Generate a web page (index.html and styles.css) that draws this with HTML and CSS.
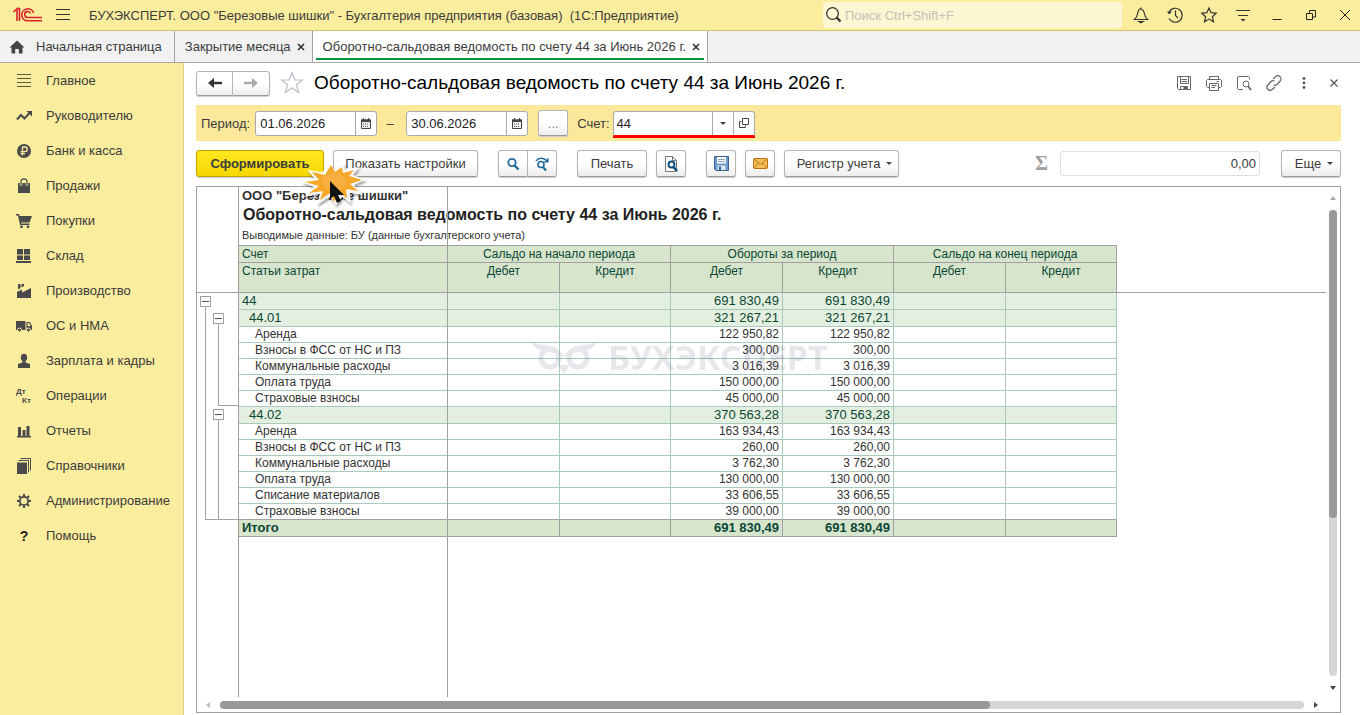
FILE: index.html
```html
<!DOCTYPE html>
<html lang="ru">
<head>
    <meta charset="UTF-8">
    <meta name="viewport" content="width=device-width, initial-scale=1.0">
    <title>Бухгалтерия предприятия</title>
    <link rel="stylesheet" href="styles.css">
</head>
<body>
    <header class="titlebar">
        <svg class="logo" width="30" height="16" viewBox="0 0 30 16" fill="none" stroke="#d8232a" stroke-width="1.6">
            <path d="M0.500 5L4 2V14M6.500 1V14"/>
            <path d="M4 1.500H7"/>
            <path d="M20.500 6A6 6 0 1 0 14.500 13.800H29"/>
            <path d="M17.500 6.500A3 3 0 1 0 15 10.500H29"/>
        </svg>
        <button class="icon-btn burger" aria-label="Меню">
            <svg width="16" height="14" viewBox="0 0 16 14" stroke="#333"><path d="M1 1.500H15M1 6.500H15M1 11.500H15"/></svg>
        </button>
        <span class="app-title">БУХЭКСПЕРТ. ООО "Березовые шишки" - Бухгалтерия предприятия (базовая)&nbsp; (1С:Предприятие)</span>
        <label class="search">
            <svg width="18" height="18" viewBox="0 0 18 18" fill="none" stroke="#333"><circle cx="7.500" cy="7.500" r="5.800" stroke-width="1.300"/><path d="M11.500 11.500L15.500 15.500" stroke-width="2.400"/></svg>
            <input type="text" placeholder="Поиск Ctrl+Shift+F" aria-label="Поиск">
        </label>
        <div class="window-tools">
            <button class="icon-btn" aria-label="Уведомления">
                <svg width="16" height="18" viewBox="0 0 16 18" fill="none" stroke="#333" stroke-width="1.200"><path d="M8 1.500V3M1.500 13.500H14.500C12.500 12 12 10.500 11.500 8C11 5 10 3.500 8 3S5 5 4.500 8C4 10.500 3.500 12 1.500 13.500Z"/><path d="M6 15.500H10L8 16.800Z" fill="#333"/></svg>
            </button>
            <button class="icon-btn" aria-label="История">
                <svg width="18" height="18" viewBox="0 0 18 18" fill="none" stroke="#333" stroke-width="1.200"><path d="M3 6A7 7 0 1 1 3 12.500M9.500 4.500V9.500L12 12"/><path d="M1 5.500H6L3.200 8.500Z" fill="#333" stroke="none"/></svg>
            </button>
            <button class="icon-btn" aria-label="Избранное">
                <svg width="18" height="18" viewBox="0 0 18 18" fill="none" stroke="#333" stroke-width="1.200"><path d="M9 2L11.100 6.700L16.200 7.200L12.400 10.700L13.500 15.700L9 13.100L4.500 15.700L5.600 10.700L1.800 7.200L6.900 6.700Z"/></svg>
            </button>
            <button class="icon-btn" aria-label="Настройки">
                <svg width="16" height="16" viewBox="0 0 16 16" stroke="#333" stroke-width="1.200"><path d="M1 3.500H15M3 8.500H13"/><path d="M5.500 12H10.500L8 14.500Z" fill="#333" stroke="none"/></svg>
            </button>
            <button class="icon-btn" aria-label="Свернуть">
                <svg width="12" height="12" viewBox="0 0 12 12" stroke="#222"><path d="M1.500 10.500H10.500"/></svg>
            </button>
            <button class="icon-btn" aria-label="Восстановить">
                <svg width="12" height="12" viewBox="0 0 12 12" fill="none" stroke="#222"><path d="M1.500 4.500H7.500V10.500H1.500ZM4.500 4V1.500H10.500V8H8"/></svg>
            </button>
            <button class="icon-btn" aria-label="Закрыть">
                <svg width="12" height="12" viewBox="0 0 12 12" stroke="#222"><path d="M1 1L11 11M11 1L1 11"/></svg>
            </button>
        </div>
    </header>

    <nav class="tabs">
        <div class="tab tab-home">
            <svg width="16" height="14" viewBox="0 0 16 14" fill="#444"><path d="M8 0.500L15.500 7.500H13.500V13.500H9.800V9H6.200V13.500H2.500V7.500H0.500Z"/></svg>
            <a href="#">Начальная страница</a>
        </div>
        <div class="tab">
            <a href="#">Закрытие месяца</a>
            <button class="tab-close" aria-label="Закрыть вкладку"><svg width="8" height="8" viewBox="0 0 8 8" stroke="#333" stroke-width="1.600"><path d="M1 1L7 7M7 1L1 7"/></svg></button>
        </div>
        <div class="tab active">
            <a href="#">Оборотно-сальдовая ведомость по счету 44 за Июнь 2026 г.</a>
            <button class="tab-close" aria-label="Закрыть вкладку"><svg width="8" height="8" viewBox="0 0 8 8" stroke="#333" stroke-width="1.600"><path d="M1 1L7 7M7 1L1 7"/></svg></button>
        </div>
    </nav>

    <div class="workspace">
        <nav class="sidebar">
            <a href="#"><svg viewBox="0 0 16 16" stroke="#5c583f" fill="none"><path d="M1 1.500H15M1 5.500H15M1 9.500H15M1 13.500H15"/></svg>Главное</a>
            <a href="#"><svg viewBox="0 0 16 16"><path d="M1 11.500L5 7L8.500 10.500L13.500 5" fill="none" stroke="#4a4a4a" stroke-width="2"/><path d="M10.500 3H16V8.500Z"/></svg>Руководителю</a>
            <a href="#"><svg viewBox="0 0 16 16"><circle cx="8" cy="8" r="7"/><path d="M6.500 12.500V4H9A2.300 2.300 0 0 1 9 8.600H4.500M4.500 10.700H9" fill="none" stroke="#fbed9e" stroke-width="1.300"/></svg>Банк и касса</a>
            <a href="#"><svg viewBox="0 0 16 16"><path d="M2 5H14V15H2Z"/><path d="M5 7.500V3.500A3 2.600 0 0 1 11 3.500V7.500" fill="none" stroke="#fbed9e" stroke-width="2.600"/><path d="M5 7V3.500A3 2.600 0 0 1 11 3.500V7" fill="none" stroke="#4a4a4a" stroke-width="1.200"/></svg>Продажи</a>
            <a href="#"><svg viewBox="0 0 16 16"><path d="M0 1H3L3.600 3H16L13.500 9.500H5L5.300 10.500H13.500V12H4L2 2.500H0Z"/><circle cx="5.500" cy="13.800" r="1.400"/><circle cx="12" cy="13.800" r="1.400"/></svg>Покупки</a>
            <a href="#"><svg viewBox="0 0 16 16"><path d="M1 1H7V6.500H1ZM8 1H14V6.500H8ZM1 7.500H7V12H1ZM8 7.500H14V12H8ZM0 13H15V15H0Z"/></svg>Склад</a>
            <a href="#"><svg viewBox="0 0 16 16"><path d="M1 15V9L6 6.500V9.500L15 5V15ZM2 1H4.500V5L2 6.500ZM5.500 1H8V3L5.500 4.500Z"/></svg>Производство</a>
            <a href="#"><svg viewBox="0 0 16 16"><path d="M0 3H9.500V12H0ZM10.500 4H14L16 8V12H10.500Z"/><path d="M11.500 5.200H13.500L14.500 8H11.500Z" fill="#fbed9e"/><circle cx="3.500" cy="12" r="2" stroke="#fbed9e"/><circle cx="12.500" cy="12" r="2" stroke="#fbed9e"/></svg>ОС и НМА</a>
            <a href="#"><svg viewBox="0 0 16 16"><ellipse cx="8" cy="4.500" rx="3.200" ry="3.800"/><path d="M6.500 7H9.500V9.500L14 11V15H2V11L6.500 9.500Z"/></svg>Зарплата и кадры</a>
            <a href="#"><svg viewBox="0 0 16 16" font-family="Liberation Sans, sans-serif" font-weight="bold" font-size="8"><text x="0" y="6">Дт</text><text x="6" y="15">Кт</text></svg>Операции</a>
            <a href="#"><svg viewBox="0 0 16 16"><path d="M1 13H15V14.500H1ZM2 4H5V13H2ZM6.500 7H9.500V13H6.500ZM10.500 3H13.500V13H10.500Z"/></svg>Отчеты</a>
            <a href="#"><svg viewBox="0 0 16 16"><path d="M1 4.500H11V16H1Z"/><path d="M2.500 2.500H12.500V14.500M4.500 0.500H14.500V12.500" fill="none" stroke="#4a4a4a"/></svg>Справочники</a>
            <a href="#"><svg viewBox="0 0 16 16" fill="none" stroke="#4a4a4a"><circle cx="8" cy="8" r="4.200" stroke-width="1.800"/><path d="M8 1V3.500M8 12.500V15M1 8H3.500M12.500 8H15M3 3L4.800 4.800M11.200 11.200L13 13M13 3L11.200 4.800M4.800 11.200L3 13" stroke-width="2"/></svg>Администрирование</a>
            <a href="#"><span class="question">?</span>Помощь</a>
        </nav>

        <main class="page">
            <div class="page-head">
                <div class="btn-group">
                    <button class="btn nav-btn" aria-label="Назад"><svg width="16" height="12" viewBox="0 0 16 12"><path d="M3 6H15" stroke="#333" stroke-width="2.400"/><path d="M1 6L7 1V11Z" fill="#333"/></svg></button>
                    <button class="btn nav-btn" aria-label="Вперед"><svg width="16" height="12" viewBox="0 0 16 12"><path d="M1 6H13" stroke="#aaa" stroke-width="2.400"/><path d="M15 6L9 1V11Z" fill="#aaa"/></svg></button>
                </div>
                <button class="icon-btn star" aria-label="В избранное"><svg width="24" height="24" viewBox="0 0 24 24" fill="none" stroke="#b9bcc4" stroke-width="1.200"><path d="M12 1.500L14.800 9H22.500L16.400 13.800L18.700 21.500L12 17L5.300 21.500L7.600 13.800L1.500 9H9.200Z"/></svg></button>
                <h1>Оборотно-сальдовая ведомость по счету 44 за Июнь 2026 г.</h1>
                <div class="page-tools">
                    <button class="icon-btn" aria-label="Сохранить"><svg width="16" height="16" viewBox="0 0 16 16" fill="none" stroke="#666"><path d="M1.500 1.500H14.500V14.500H2.500L1.500 13.500ZM4.500 1.500V8.500H12.500V1.500M5.500 4.500H11M5.500 6.500H11M4.500 14.500V11.500H11.500V14.500"/><path d="M8 12H11V14H8Z" fill="#555"/></svg></button>
                    <button class="icon-btn" aria-label="Печать"><svg width="16" height="16" viewBox="0 0 16 16" fill="none" stroke="#666"><path d="M3.500 4.500V1.500H12.500V4.500M3.500 12.500H1.500L0.500 11.500V5.500L1.500 4.500H14.500L15.500 5.500V11.500L14.500 12.500H12.500M3.500 8.500H12.500V15.500H3.500ZM5.500 10.500H10.500M5.500 12.500H9M10.500 6.500H13"/></svg></button>
                    <button class="icon-btn" aria-label="Предварительный просмотр"><svg width="16" height="16" viewBox="0 0 16 16" fill="none" stroke="#666"><path d="M7 14.500H2.500L1.500 13.500V2L2.500 1.500H12.500L13.500 2.500V4.500"/><circle cx="10" cy="9" r="3"/><path d="M12 11L15 15" stroke-width="1.800"/></svg></button>
                    <button class="icon-btn" aria-label="Ссылка"><svg width="16" height="16" viewBox="0 0 16 16" fill="none" stroke="#666" stroke-width="1.200"><path d="M7 4L9.500 1.800A3 3 0 0 1 14.200 6L11 9.500A3 3 0 0 1 7.500 10"/><path d="M9 12L6.500 14.200A3 3 0 0 1 1.800 10L5 6.500A3 3 0 0 1 8.500 6"/></svg></button>
                    <button class="icon-btn" aria-label="Еще"><svg width="4" height="14" viewBox="0 0 4 14" fill="#555"><circle cx="2" cy="2.500" r="1.400"/><circle cx="2" cy="7" r="1.400"/><circle cx="2" cy="11.500" r="1.400"/></svg></button>
                    <button class="icon-btn" aria-label="Закрыть"><svg width="8" height="8" viewBox="0 0 8 8" stroke="#555" stroke-width="1.200"><path d="M0.500 0.500L7.500 7.500M7.500 0.500L0.500 7.500"/></svg></button>
                </div>
            </div>

            <div class="filter">
                <label for="date-from">Период:</label>
                <div class="field">
                    <input id="date-from" type="text" value="01.06.2026">
                    <button aria-label="Календарь"><svg width="10" height="11" viewBox="0 0 10 11"><path d="M0.500 2H9.500V10.500H0.500Z" fill="#eee" stroke="#444"/><path d="M0 1.500H10V4H0ZM2 0H3V2H2ZM7 0H8V2H7Z" fill="#444"/><path d="M2 6H8M2 8.500H8" stroke="#555" stroke-dasharray="1 1"/></svg></button>
                </div>
                <span class="dash">–</span>
                <div class="field field-to">
                    <input type="text" value="30.06.2026" aria-label="Конец периода">
                    <button aria-label="Календарь"><svg width="10" height="11" viewBox="0 0 10 11"><path d="M0.500 2H9.500V10.500H0.500Z" fill="#eee" stroke="#444"/><path d="M0 1.500H10V4H0ZM2 0H3V2H2ZM7 0H8V2H7Z" fill="#444"/><path d="M2 6H8M2 8.500H8" stroke="#555" stroke-dasharray="1 1"/></svg></button>
                </div>
                <button class="btn dots">...</button>
                <label for="account">Счет:</label>
                <div class="field account">
                    <input id="account" type="text" value="44">
                    <button aria-label="Выбрать"><i class="caret"></i></button>
                    <button aria-label="Открыть"><svg width="10" height="10" viewBox="0 0 10 10" fill="none" stroke="#444"><path d="M3.500 0.500H9.500V6.500H3.500ZM2.500 3.500H0.500V9.500H6.500V7.500"/></svg></button>
                </div>
            </div>

            <div class="toolbar">
                <button class="btn primary">Сформировать
                    <svg class="click-mark" width="68" height="48" viewBox="0 0 68 48">
                        <path d="M30 3L35 8L44 1L45 8L60 5L53 13L66 18L54 23L63 33L50 31L51 42L42 35L36 44L30 35L17 43L20 32L4 35L14 25L1 20L15 17L7 8L22 10Z" fill="#fff" opacity=".9"/>
                        <path d="M31 3L35 10L42 5L43 11L54 8L49 14L62 18L50 22L58 29L46 27L47 36L39 31L34 40L30 31L20 38L23 29L9 31L19 24L5 20L19 18L12 10L25 13Z" fill="#f6a828"/>
                        <ellipse cx="34" cy="20" rx="12" ry="9" fill="#f7b040"/>
                        <path d="M30 19V37L34 34L37 41L41 39L38 33H44Z" fill="#111"/>
                    </svg>
                </button>
                <button class="btn settings">Показать настройки</button>
                <div class="btn-group spaced">
                    <button class="btn square" aria-label="Найти"><svg width="14" height="14" viewBox="0 0 14 14" fill="none" stroke="#1e6a9e"><circle cx="6" cy="5.500" r="3.700" stroke-width="1.800"/><path d="M8.500 8.500L12.500 12.500" stroke-width="2.400"/></svg></button>
                    <button class="btn square" aria-label="Найти далее"><svg width="16" height="16" viewBox="0 0 16 16" fill="none" stroke="#1e6a9e"><circle cx="7" cy="8.500" r="3" stroke-width="1.600"/><path d="M9 11L12 14.500" stroke-width="2.200"/><path d="M2 5C4 1.500 9 1.500 12 4" stroke-width="1.500"/><path d="M14.500 1.500V6.500H9.500Z" fill="#1e6a9e" stroke="none"/></svg></button>
                </div>
                <button class="btn print spaced">Печать</button>
                <button class="btn square" aria-label="Просмотр"><svg width="16" height="16" viewBox="0 0 16 16" fill="none"><path d="M2.500 0.500H9.500L13.500 4.500V15.500H2.500Z" stroke="#777" fill="#fff"/><path d="M9.500 0.500V4.500H13.500" stroke="#777"/><circle cx="8.500" cy="8.500" r="3" stroke="#0c4f80" stroke-width="1.900"/><path d="M10.500 11L14 15" stroke="#0c4f80" stroke-width="2.600"/></svg></button>
                <button class="btn square spaced" aria-label="Сохранить"><svg width="15" height="15" viewBox="0 0 15 15"><path d="M0.500 0.500H14.500V14.500H2L0.500 13Z" fill="#6b9bcb" stroke="#39638f"/><path d="M3 1H12V7.500H3Z" fill="#f5f7fa"/><path d="M4 3.500H11M4 5.500H11" stroke="#9aa9b8"/><path d="M3.500 9.500H11.500V14H3.500Z" fill="#dbe5ef"/><path d="M5 10.500H7V14H5Z" fill="#39638f"/></svg></button>
                <button class="btn square" aria-label="Отправить"><svg width="15" height="11" viewBox="0 0 15 11" stroke="#b9720d"><rect x=".5" y=".5" width="14" height="10" rx="1" fill="#f3bf5c"/><path d="M1 1L7.500 6.500L14 1M1 10L5.500 5M14 10L9.500 5" fill="none"/></svg></button>
                <button class="btn register">Регистр учета<i class="caret"></i></button>
                <span class="sigma">Σ</span>
                <input class="sum" type="text" value="0,00" aria-label="Сумма">
                <button class="btn more">Еще<i class="caret"></i></button>
            </div>

            <section class="report">
                <div class="sheet">
                    <div class="outline">
                        <button class="fold" aria-label="Свернуть 44"></button>
                        <div class="branch">
                            <button class="fold" aria-label="Свернуть 44.01"></button>
                            <div class="leaf leaf-first"></div>
                            <button class="fold" aria-label="Свернуть 44.02"></button>
                            <div class="leaf leaf-last"></div>
                        </div>
                    </div>
                    <div class="doc">
                        <p class="org">ООО "Березовые шишки"</p>
                        <h2>Оборотно-сальдовая ведомость по счету 44 за Июнь 2026 г.</h2>
                        <p class="info">Выводимые данные: БУ (данные бухгалтерского учета)</p>
                        <table>
                            <colgroup><col class="col-name"><col class="col-d"><col class="col-k"><col class="col-d"><col class="col-k"><col class="col-d"><col class="col-k"></colgroup>
                            <thead>
                                <tr><th class="left">Счет</th><th colspan="2">Сальдо на начало периода</th><th colspan="2">Обороты за период</th><th colspan="2">Сальдо на конец периода</th></tr>
                                <tr class="tall"><th class="left">Статьи затрат</th><th>Дебет</th><th>Кредит</th><th>Дебет</th><th>Кредит</th><th>Дебет</th><th>Кредит</th></tr>
                            </thead>
                            <tbody>
                                <tr class="group"><td>44</td><td></td><td></td><td>691 830,49</td><td>691 830,49</td><td></td><td></td></tr>
                                <tr class="group sub"><td>44.01</td><td></td><td></td><td>321 267,21</td><td>321 267,21</td><td></td><td></td></tr>
                                <tr><td>Аренда</td><td></td><td></td><td>122 950,82</td><td>122 950,82</td><td></td><td></td></tr>
                                <tr><td>Взносы в ФСС от НС и ПЗ</td><td></td><td></td><td>300,00</td><td>300,00</td><td></td><td></td></tr>
                                <tr><td>Коммунальные расходы</td><td></td><td></td><td>3 016,39</td><td>3 016,39</td><td></td><td></td></tr>
                                <tr><td>Оплата труда</td><td></td><td></td><td>150 000,00</td><td>150 000,00</td><td></td><td></td></tr>
                                <tr><td>Страховые взносы</td><td></td><td></td><td>45 000,00</td><td>45 000,00</td><td></td><td></td></tr>
                                <tr class="group sub"><td>44.02</td><td></td><td></td><td>370 563,28</td><td>370 563,28</td><td></td><td></td></tr>
                                <tr><td>Аренда</td><td></td><td></td><td>163 934,43</td><td>163 934,43</td><td></td><td></td></tr>
                                <tr><td>Взносы в ФСС от НС и ПЗ</td><td></td><td></td><td>260,00</td><td>260,00</td><td></td><td></td></tr>
                                <tr><td>Коммунальные расходы</td><td></td><td></td><td>3 762,30</td><td>3 762,30</td><td></td><td></td></tr>
                                <tr><td>Оплата труда</td><td></td><td></td><td>130 000,00</td><td>130 000,00</td><td></td><td></td></tr>
                                <tr><td>Списание материалов</td><td></td><td></td><td>33 606,55</td><td>33 606,55</td><td></td><td></td></tr>
                                <tr class="last"><td>Страховые взносы</td><td></td><td></td><td>39 000,00</td><td>39 000,00</td><td></td><td></td></tr>
                            </tbody>
                            <tfoot>
                                <tr><td>Итого</td><td></td><td></td><td>691 830,49</td><td>691 830,49</td><td></td><td></td></tr>
                            </tfoot>
                        </table>
                    </div>
                    <!-- закрепленная область -->
                    <div class="freeze-row"></div>
                    <div class="freeze-col"></div>
                    <div class="watermark">
                        <svg width="66" height="34" viewBox="0 0 66 34" fill="none" stroke="currentColor" stroke-width="5"><circle cx="19" cy="18" r="9"/><circle cx="47" cy="18" r="9"/><path d="M0 2C8 6 20 4 27 9L33 15L39 9C46 4 58 6 66 2C63 8 58 10 52 10L33 17L14 10C8 10 3 8 0 2ZM27 25H39L33 34Z" fill="currentColor" stroke="none"/></svg>
                        <span>БУХЭКСПЕРТ</span>
                    </div>
                </div>
                <div class="vbar">
                    <i class="arrow up"></i>
                    <div class="track"><div class="thumb"></div></div>
                    <i class="arrow down"></i>
                </div>
                <div class="hbar">
                    <i class="arrow prev"></i>
                    <div class="track"><div class="thumb"></div></div>
                    <i class="arrow next"></i>
                </div>
            </section>
        </main>
    </div>
</body>
</html>
```
FILE: styles.css
```css
* {
    box-sizing: border-box;
}

body {
    margin: 0;
    height: 100vh;
    display: flex;
    flex-direction: column;
    font-family: "Liberation Sans", Arial, sans-serif;
    font-size: 13px;
    color: #3c3c3c;
    background: #fff;
    overflow: hidden;
}

button, input {
    font: inherit;
    color: inherit;
}

button {
    cursor: pointer;
}

a {
    color: inherit;
    text-decoration: none;
}

.icon-btn {
    display: flex;
    align-items: center;
    justify-content: center;
    padding: 0;
    border: none;
    background: none;
}

/* Заголовок окна */
.titlebar {
    flex: none;
    display: flex;
    align-items: center;
    height: 31px;
    padding-left: 13px;
    background: #fbed9e;
    border-bottom: 1px solid #d3c16c;
}

.burger {
    width: 20px;
    margin-left: 10px;
}

.app-title {
    margin-left: 16px;
    white-space: nowrap;
}

.search {
    display: flex;
    align-items: center;
    width: 299px;
    height: 26px;
    margin-left: auto;
    padding-left: 2px;
    background: #fdf6d3;
    border-radius: 3px;
}

.search input {
    flex: 1;
    min-width: 0;
    padding: 0 2px;
    border: none;
    outline: none;
    background: none;
}

.search input::placeholder {
    color: #c3c0b8;
}

.window-tools {
    display: flex;
    gap: 4px;
    margin-left: 4px;
}

.window-tools .icon-btn {
    width: 30px;
    height: 30px;
}

/* Вкладки */
.tabs {
    flex: none;
    display: flex;
    height: 32px;
    background: #f1f1f1;
    border-bottom: 1px solid #a9a9a9;
}

.tab {
    display: flex;
    align-items: center;
    gap: 5px;
    padding: 0 6px 0 10px;
    border-right: 1px solid #a0a0a0;
    white-space: nowrap;
}

.tab-home {
    gap: 11px;
    padding: 0 12px 0 9px;
}

.tab.active {
    background: linear-gradient(#009646, #009646) center bottom 2px / calc(100% - 6px) 2px no-repeat #fff;
}

.tab-close {
    display: flex;
    padding: 1px;
    border: none;
    background: none;
}

.workspace {
    flex: 1;
    display: flex;
    min-height: 0;
}

/* Разделы */
.sidebar {
    flex: none;
    width: 184px;
    background: #fbed9e;
    border-right: 1px solid #d9cc85;
}

.sidebar a {
    display: flex;
    align-items: center;
    gap: 14px;
    height: 35px;
    padding-left: 16px;
}

.sidebar svg, .question {
    width: 16px;
    height: 16px;
    fill: #4a4a4a;
}

.sidebar svg[fill="none"] {
    fill: none;
}

.question {
    font-size: 14px;
    line-height: 16px;
    font-weight: bold;
    text-align: center;
    color: #222;
}

/* Страница */
.page {
    flex: 1;
    min-width: 0;
    display: flex;
    flex-direction: column;
    padding: 0 19px 2px 12px;
}

.page-head {
    flex: none;
    display: flex;
    align-items: center;
    height: 42px;
    padding-bottom: 2px;
    margin-right: -5px;
}

.page-head h1 {
    margin: 0;
    font-size: 19px;
    font-weight: normal;
    color: #000;
    white-space: nowrap;
}

.star {
    margin: 0 10px;
}

.page-tools {
    display: flex;
    gap: 6px;
    margin-left: auto;
}

.page-tools .icon-btn {
    width: 24px;
    height: 24px;
}

.btn {
    display: flex;
    align-items: center;
    justify-content: center;
    height: 27px;
    padding: 0 12px;
    border: 1px solid #b4b4b4;
    border-bottom-color: #9a9a9a;
    border-radius: 3px;
    background: linear-gradient(#fff 50%, #ededed);
    box-shadow: 0 1px 1px #ccc;
    white-space: nowrap;
}

.btn-group {
    display: flex;
}

.btn-group .btn:first-child {
    border-radius: 3px 0 0 3px;
}

.btn-group .btn:last-child {
    border-left: none;
    border-radius: 0 3px 3px 0;
}

.btn.nav-btn {
    width: 37px;
    height: 25px;
    padding: 0;
}

.caret {
    width: 0;
    height: 0;
    border: 3px solid transparent;
    border-top-color: #444;
    border-bottom: none;
}

/* Отбор */
.filter {
    flex: none;
    display: flex;
    align-items: center;
    height: 36px;
    padding-left: 5px;
    background: #fbe89b;
}

.field {
    display: flex;
    width: 122px;
    height: 25px;
    margin-left: 5px;
    background: #fff;
    border: 1px solid #aaa;
    border-radius: 3px;
}

.field-to {
    margin-left: 3px;
}

.field input {
    flex: 1;
    min-width: 0;
    padding: 0 4px;
    border: none;
    outline: none;
    background: none;
    color: #222;
}

.field button {
    display: flex;
    align-items: center;
    justify-content: center;
    width: 21px;
    padding: 0;
    border: none;
    border-left: 1px solid #aaa;
    background: none;
}

.dash {
    width: 26px;
    text-align: center;
}

.btn.dots {
    width: 30px;
    height: 26px;
    margin: 0 9px 0 10px;
    color: #888;
}

.field.account {
    width: 142px;
    margin-left: 3px;
    border-radius: 3px 3px 0 0;
    box-shadow: 0 2px 0 #f00;
    border-bottom-color: #f00;
}

.field.account input {
    padding: 0 3px;
}

/* Команды */
.toolbar {
    flex: none;
    display: flex;
    align-items: center;
    gap: 9px;
    height: 45px;
}

.btn.primary {
    position: relative;
    width: 128px;
    border-color: #c0a500;
    background: linear-gradient(#ffe81f, #f5d800);
    font-weight: bold;
}

.click-mark {
    position: absolute;
    left: 103px;
    top: 11px;
    z-index: 2;
    filter: drop-shadow(1px 2px 1px rgba(0, 0, 0, 0.4));
}

.btn.settings {
    width: 145px;
}

.btn.square {
    width: 30px;
    padding: 0;
}

.btn-group .btn.square:last-child {
    width: 29px;
}

.spaced {
    margin-left: 11px;
}

.btn.print {
    width: 70px;
}

.btn.register {
    width: 115px;
    gap: 6px;
    padding: 0 6px 0 12px;
}

.sigma {
    margin-left: auto;
    margin-right: 3px;
    color: #a0a0a0;
    font-family: "Liberation Serif", serif;
    font-size: 20px;
    font-weight: bold;
}

.sum {
    width: 200px;
    height: 25px;
    padding: 0 3px;
    border: 1px solid #ddd;
    border-radius: 3px;
    text-align: right;
}

.btn.more {
    width: 60px;
    gap: 6px;
    margin-left: 12px;
    padding: 0 6px 0 12px;
}

/* Отчет */
.report {
    flex: 1;
    min-height: 0;
    display: grid;
    grid-template-columns: minmax(0, 1fr) 14px;
    grid-template-rows: minmax(0, 1fr) 15px;
    border: 1px solid #a0a0a0;
}

.sheet {
    position: relative;
    display: flex;
    overflow: hidden;
}

.outline {
    flex: none;
    width: 42px;
    padding: 109px 0 0 3px;
    border-right: 1px solid #a0a0a0;
}

.fold {
    display: block;
    width: 11px;
    height: 11px;
    padding: 0;
    border: 1px solid #a0a0a0;
    background: linear-gradient(#555, #555) center / 7px 1px no-repeat #fff;
}

.branch {
    height: 213px;
    margin-left: 5px;
    padding-top: 6px;
    border: solid #a0a0a0;
    border-width: 0 0 1px 1px;
}

.branch .fold {
    margin-left: 7px;
}

.leaf {
    margin-left: 12px;
    border-left: 1px solid #a0a0a0;
}

.leaf-first {
    height: 82px;
    margin-bottom: 3px;
    border-bottom: 1px solid #a0a0a0;
}

.leaf-last {
    height: 99px;
}

.doc {
    flex: 1;
    min-width: 0;
    color: #333;
}

.doc p, .doc h2 {
    margin: 0;
    padding-left: 3px;
    white-space: nowrap;
}

.doc .org {
    font-size: 13px;
    line-height: 17px;
    font-weight: bold;
}

.doc h2 {
    padding-left: 4px;
    font-size: 16px;
    line-height: 21px;
    color: #222;
}

.doc .info {
    font-size: 11px;
    line-height: 20px;
}

table {
    width: 878px;
    table-layout: fixed;
    border-collapse: separate;
    border-spacing: 0;
    border-top: 1px solid #a0a0a0;
    font-size: 12px;
    line-height: 15px;
}

.col-name {
    width: 209px;
}

.col-d {
    width: 112px;
}

.col-k {
    width: 111px;
}

th, td {
    height: 16px;
    padding: 0 3px;
    border: solid #a9c9bf;
    border-width: 0 1px 1px 0;
    text-align: right;
    white-space: nowrap;
}

th {
    height: 17px;
    border-color: #a0a0a0;
    background: #d7e5cc;
    color: #0b4635;
    line-height: 16px;
    font-weight: normal;
    text-align: center;
    vertical-align: top;
}

.tall th {
    height: 30px;
}

th.left {
    text-align: left;
}

td:first-child {
    padding-left: 16px;
    border-right-color: #a0a0a0;
    text-align: left;
}

.group td {
    height: 17px;
    background: #e4f0df;
    color: #0b4635;
    font-size: 13px;
    line-height: 16px;
}

.group td:first-child {
    padding-left: 3px;
}

.sub td:first-child {
    padding-left: 10px;
}

.last td {
    border-bottom-color: #a0a0a0;
}

tfoot td {
    height: 17px;
    border-color: #a0a0a0;
    background: #d7e5cc;
    color: #0b4635;
    font-size: 13px;
    line-height: 16px;
    font-weight: bold;
}

tfoot td:first-child {
    padding-left: 3px;
}

.freeze-row {
    position: absolute;
    top: 105px;
    left: 0;
    right: 0;
    border-top: 1px solid #a0a0a0;
}

.freeze-col {
    position: absolute;
    top: 0;
    bottom: 0;
    left: 250px;
    border-left: 1px solid #a0a0a0;
}

.watermark {
    position: absolute;
    top: 148px;
    left: 334px;
    display: flex;
    align-items: center;
    gap: 11px;
    color: #606080;
    opacity: 0.15;
    font-family: "Noto Sans", sans-serif;
    font-size: 34px;
    line-height: 44px;
    font-weight: bold;
    pointer-events: none;
}

/* Прокрутка */
.track {
    flex: 1;
    background: #d6d6d6;
    border-radius: 4px;
}

.thumb {
    background: #999;
    border-radius: 4px;
}

.vbar {
    display: flex;
    flex-direction: column;
    align-items: center;
    gap: 10px;
    padding: 9px 0 7px;
}

.vbar .track {
    width: 8px;
}

.vbar .thumb {
    height: 66%;
}

.hbar {
    display: flex;
    align-items: center;
    gap: 10px;
    padding: 0 8px 0 9px;
}

.hbar .track {
    height: 8px;
}

.hbar .thumb {
    width: 71%;
    height: 8px;
}

.arrow {
    width: 0;
    height: 0;
    border: 3px solid transparent;
}

.arrow.up {
    border-bottom: 4px solid #aaa;
    border-top: none;
}

.arrow.down {
    border-top: 4px solid #444;
    border-bottom: none;
}

.arrow.prev {
    border-right: 4px solid #bbb;
    border-left: none;
}

.arrow.next {
    border-left: 4px solid #444;
    border-right: none;
}
```
